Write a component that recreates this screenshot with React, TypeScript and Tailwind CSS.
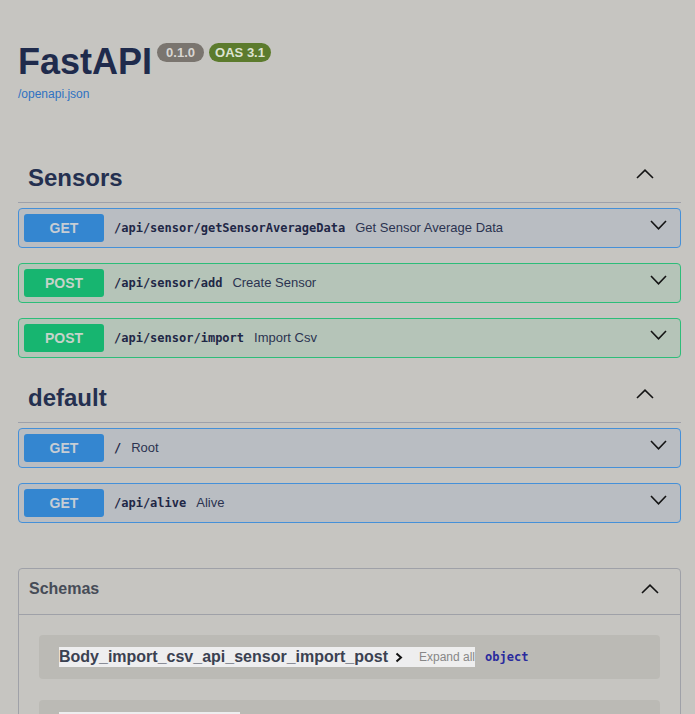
import React from 'react';

type Op = {
  method: 'GET' | 'POST';
  path: string;
  summary: string;
};

const sections: { name: string; ops: Op[] }[] = [
  {
    name: 'Sensors',
    ops: [
      { method: 'GET', path: '/api/sensor/getSensorAverageData', summary: 'Get Sensor Average Data' },
      { method: 'POST', path: '/api/sensor/add', summary: 'Create Sensor' },
      { method: 'POST', path: '/api/sensor/import', summary: 'Import Csv' },
    ],
  },
  {
    name: 'default',
    ops: [
      { method: 'GET', path: '/', summary: 'Root' },
      { method: 'GET', path: '/api/alive', summary: 'Alive' },
    ],
  },
];

const schemas = ['Body_import_csv_api_sensor_import_post', 'HTTPValidationError', 'ValidationError'];

/* ── chevrons ─────────────────────────────────────────────── */
function ChevronUp({ className = '' }: { className?: string }) {
  return (
    <svg width="18" height="10" viewBox="0 0 18 10" className={className}>
      <polyline points="1,9 9,1.2 17,9" fill="none" stroke="#141414" strokeWidth="1.6" />
    </svg>
  );
}

function ChevronDown({ className = '' }: { className?: string }) {
  return (
    <svg width="17" height="10" viewBox="0 0 17 10" className={className}>
      <polyline points="1,1 8.5,8.8 16,1" fill="none" stroke="#141414" strokeWidth="1.6" />
    </svg>
  );
}

/* ── una operación ─────────────────────────────────────────── */
function OpRow({ op }: { op: Op }) {
  const get = op.method === 'GET';
  return (
    <div
      className={
        get
          ? 'mb-[15px] flex h-[40px] items-center rounded-[4px] border border-[#4590d8] bg-[#b9bdc2] px-[5px]'
          : 'mb-[15px] flex h-[40px] items-center rounded-[4px] border border-[#2dbd79] bg-[#b5c4b8] px-[5px]'
      }
    >
      <span
        className={
          get
            ? 'flex h-[28px] w-[80px] items-center justify-center rounded-[3px] bg-[#3486d0] text-[14px] font-bold text-[#c6cdd4]'
            : 'flex h-[28px] w-[80px] items-center justify-center rounded-[3px] bg-[#17b570] text-[14px] font-bold text-[#c6d3ca]'
        }
      >
        {op.method}
      </span>
      <span className="ml-[10px] font-['DejaVu_Sans_Mono',monospace] text-[12px] font-bold text-[#1f2746]">
        {op.path}
      </span>
      <span className="ml-[10px] text-[13px] text-[#2b3350]">{op.summary}</span>
      <ChevronDown className="mb-[6px] ml-auto mr-[8px]" />
    </div>
  );
}

export default function App() {
  return (
    <div className="min-h-screen bg-[#c6c5c1] font-['Liberation_Sans',Arial,sans-serif]">
      <div className="ml-[18px] w-[663px] pb-[60px] pt-[44px]">
        {/* ── cabecera ── */}
        <div className="flex items-start">
          <h1 className="text-[36px] font-bold leading-[36px] text-[#1f2b4c]">FastAPI</h1>
          <span className="-mt-px ml-[5px] flex h-[19px] w-[47px] items-center justify-center rounded-full bg-[#7a756f] text-[13px] font-bold text-[#d8d6d2]">
            0.1.0
          </span>
          <span className="-mt-px ml-[5px] flex h-[19px] w-[62px] items-center justify-center rounded-full bg-[#5c7b2d] text-[13px] font-bold text-[#dde3d2]">
            OAS 3.1
          </span>
        </div>
        <a className="mt-[6px] block text-[12px] leading-[16px] text-[#2f72c2]">/openapi.json</a>

        {/* ── secciones ── */}
        <div className="mt-[51px]">
          {sections.map((s) => (
            <div key={s.name}>
              <div className="flex items-center justify-between border-b border-[#9ea1aa] pb-[8px] pl-[10px] pr-[27px] pt-[9px]">
                <h3 className="text-[24px] font-bold leading-[32px] text-[#243050]">{s.name}</h3>
                <ChevronUp className="mb-[8px]" />
              </div>
              <div className="mt-[5px]">
                {s.ops.map((op) => (
                  <OpRow key={op.method + op.path} op={op} />
                ))}
              </div>
            </div>
          ))}
        </div>

        {/* ── schemas ── */}
        <div className="mt-[45px] rounded-[4px] border border-[#9fa1a8]">
          <div className="flex items-center justify-between border-b border-[#9fa1a8] pb-[15px] pl-[10px] pr-[21px] pt-[10px]">
            <h4 className="text-[16px] font-bold leading-[20px] text-[#464c57]">Schemas</h4>
            <ChevronUp />
          </div>
          <div className="px-[20px] pt-[20px]">
            {schemas.map((name, i) => (
              <div key={name} className="mb-[21px] flex items-center rounded-[4px] bg-[#bbbab5] px-[20px] py-[12px]">
                <span className="flex h-[20px] items-center bg-[#eeeeef]">
                  <span className="text-[16px] font-bold leading-[20px] text-[#3b4151]">{name}</span>
                  <svg width="8" height="11" viewBox="0 0 8 11" className="ml-[7px] mr-[10px]">
                    <polyline points="1.5,1.5 6,5.5 1.5,9.5" fill="none" stroke="#111" strokeWidth="2" />
                  </svg>
                </span>
                {i === 0 && (
                  <>
                    <span className="h-[20px] bg-[#eeeeee] pl-[6px] text-[12px] leading-[20px] text-[#878787]">
                      Expand all
                    </span>
                    <span className="ml-[10px] font-['DejaVu_Sans_Mono',monospace] text-[12px] font-bold text-[#2a2a9e]">
                      object
                    </span>
                  </>
                )}
              </div>
            ))}
          </div>
        </div>
      </div>
    </div>
  );
}
